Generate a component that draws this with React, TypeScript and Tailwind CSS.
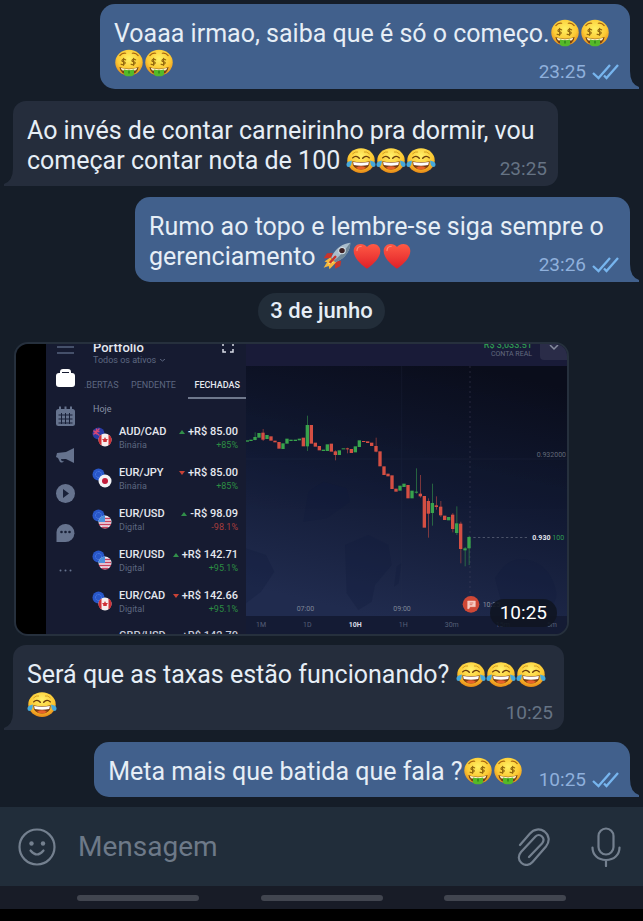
import React from 'react';

type Side = 'in' | 'out';

function Joy() {
  return (
    <svg role="img" aria-label="😂" viewBox="0 0 36 36" preserveAspectRatio="none" className="inline-block h-[27px] w-[30px] align-[-5px]">
      <defs>
        <radialGradient id="joy" cx=".5" cy=".3" r=".75">
          <stop offset="0" stopColor="#fff06a" />
          <stop offset=".6" stopColor="#fbc630" />
          <stop offset="1" stopColor="#e27b12" />
        </radialGradient>
      </defs>
      <circle cx="18" cy="18" r="16.500" fill="url(#joy)" />
      <path d="M8 9q3-3.500 6-2.500M28 9q-3-3.500-6-2.500" fill="none" stroke="#d29a1e" strokeWidth="1.200" strokeLinecap="round" />
      <path d="M8 14.500q4-4.500 8 .5M28 14.500q-4-4.500-8 .5" fill="none" stroke="#6d3d0d" strokeWidth="1.700" strokeLinecap="round" />
      <path d="M7.500 19q10.500 2.500 21 0q0 11-10.500 11t-10.500-11z" fill="#7a3b12" />
      <path d="M8.500 20q9.500 2 19 0l-.8 4q-8.700 2-17.400 0z" fill="#fff" />
      <path d="M12 27.500q6-3.500 12 0q-2.500 2.500-6 2.500t-6-2.500z" fill="#e8622a" />
      <path d="M7 18q-6.500 1.500-6.500 5.500q0 3 2.800 3q3.700-.5 3.700-8.500zM29 18q6.500 1.500 6.500 5.500q0 3-2.800 3q-3.700-.5-3.700-8.500z" fill="#45a9dc" />
    </svg>
  );
}

function MoneyFace() {
  return (
    <svg role="img" aria-label="🤑" viewBox="0 0 36 36" preserveAspectRatio="none" className="inline-block h-7 w-[30px] align-[-5px]">
      <defs>
        <radialGradient id="money" cx=".5" cy=".35" r=".7">
          <stop offset="0" stopColor="#fff164" />
          <stop offset=".6" stopColor="#fcc933" />
          <stop offset="1" stopColor="#e08218" />
        </radialGradient>
      </defs>
      <circle cx="18" cy="17.500" r="16.500" fill="url(#money)" />
      <path d="M7 8.500q3-4 7-3M29 8.500q-3-4-7-3" fill="none" stroke="#a8640e" strokeWidth="1.400" strokeLinecap="round" />
      <g fill="none" stroke="#94690f" strokeWidth="1.400" strokeLinecap="round">
        <path d="M14 14q-2.500-2-4 0t1.500 2.500t1.500 2.500t-4.500.5M11.500 12v9" />
        <path d="M26 14q-2.500-2-4 0t1.500 2.500t1.500 2.500t-4.500.5M23.500 12v9" />
      </g>
      <path d="M6.500 23q11.500 5 23 0q-1 9.500-11.500 9.500t-11.500-9.500z" fill="#76420f" />
      <path d="M8 24.200q10 3.800 20 0l-1.500 3q-8.500 2-17 0z" fill="#fff3c6" />
      <path d="M12 26.500q6 1.800 12 0v5.500q0 3-6 3t-6-3z" fill="#54b928" />
      <path d="M18 27.500v4" stroke="#237a16" strokeWidth="1.500" />
    </svg>
  );
}

function Heart() {
  return (
    <svg role="img" aria-label="❤️" viewBox="0 0 36 36" preserveAspectRatio="none" className="inline-block h-7 w-[30px] align-[-5px]">
      <defs>
        <linearGradient id="heart" x1="0" y1="0" x2="0" y2="1">
          <stop offset="0" stopColor="#ff5a45" />
          <stop offset="1" stopColor="#e01f27" />
        </linearGradient>
      </defs>
      <path d="M18 34.500C12 30 2 21 2 11.500C2 6 6 2.500 10.200 2.500C14 2.500 17 4.500 18 6.500C19 4.500 22 2.500 25.800 2.500C30 2.500 34 6 34 11.500C34 21 24 30 18 34.500z" fill="url(#heart)" />
      <path d="M6 11q0-5 5-5.500" fill="none" stroke="#ff8a76" strokeWidth="1.500" strokeLinecap="round" />
    </svg>
  );
}

function Rocket() {
  return (
    <svg role="img" aria-label="🚀" viewBox="0 0 36 36" preserveAspectRatio="none" className="inline-block h-7 w-[30px] align-[-5px]">
      <path d="M13 14L6 14.500L2 21L11 21zM23 24L22 31L16 34.500L15 25z" fill="#c8342c" />
      <path d="M10 20L3 25L6 26L2 33L8 31L9 35L17 26z" fill="#f6b83c" />
      <path d="M11 23L7 29L14 26z" fill="#fff08a" />
      <path d="M34 1C25 2 16 8 11 20L16 26C28 21 34 11 34 1z" fill="#a9bdcc" />
      <path d="M34 1C28 10 22 18 14 24L16 26C28 21 34 11 34 1z" fill="#6f8798" />
      <circle cx="24" cy="11" r="4" fill="#3c2225" stroke="#d4e1e9" strokeWidth="1.300" />
      <path d="M16 19L10 26" stroke="#c8342c" strokeWidth="3" strokeLinecap="round" />
    </svg>
  );
}

function Checks() {
  return (
    <svg aria-label="Lida" viewBox="0 0 27 16" className="h-4 w-[27px]" fill="none" stroke="#77b5ee" strokeWidth="2.300">
      <path d="M1 9l5.500 5L18 1M12 11.500l2.500 2.500L26 1" />
    </svg>
  );
}

function Bubble({ side, time, limit, children }: { side: Side; time: string; limit: string; children: React.ReactNode }) {
  const out = side === 'out';
  return (
    <article
      className={
        'relative w-fit pt-[15px] pr-[11px] pb-[10px] pl-[14px] ' + limit +
        (out ? ' mr-[13px] self-end rounded-[15px] rounded-br-none bg-[#41608c]' : ' ml-[13px] rounded-[13px] rounded-bl-none bg-[#252d3c]')
      }
    >
      {children}
      <span className={'float-right mt-[14px] -mb-1 ml-4 flex h-[18px] items-center gap-[6px] ' + (out ? 'text-[#8fb0dc]' : 'text-[#667384]')}>
        <time className="text-[19px] leading-[18px]">{time}</time>
        {out && <Checks />}
      </span>
      {out ? (
        <svg viewBox="0 0 9 18" className="absolute bottom-0 left-full h-[18px] w-[9px]" fill="#41608c"><path d="M0 0Q0 13 9 16V18H0z" /></svg>
      ) : (
        <svg viewBox="0 0 9 18" className="absolute right-full bottom-0 h-[18px] w-[9px]" fill="#252d3c"><path d="M9 0Q9 13 0 16V18H9z" /></svg>
      )}
    </article>
  );
}

type Flag = 'aud' | 'eur' | 'cad' | 'jpy' | 'usd';

function FlagDot({ kind, x, y }: { kind: Flag; x: number; y: number }) {
  return (
    <g transform={`translate(${x} ${y})`}>
      {kind === 'eur' && <><circle r="6" fill="#2856c8" /><circle r="3" fill="none" stroke="#5d8df0" strokeDasharray="1 1.300" /></>}
      {kind === 'aud' && <><circle r="6" fill="#2a3ba5" /><path d="M-5-3L1 2M1-5L-5 1M-2-5V1M-5-2H1" stroke="#d64672" strokeWidth="1.300" /><circle cx="3" cy="2" r=".8" fill="#fff" /></>}
      {kind === 'jpy' && <><circle r="6.500" fill="#f3f3f6" /><circle r="3" fill="#c31c3b" /></>}
      {kind === 'cad' && <><circle r="6.500" fill="#f6eeee" /><path d="M-3.500-5.500A6.500 6.500 0 0 0-3.500 5.500zM3.500-5.500A6.500 6.500 0 0 1 3.500 5.500z" fill="#cf3036" /><path d="M0-3l1 2 2 0-1.500 2 .5 1h-4l.5-1L-3-1l2 0z" fill="#cf3036" /></>}
      {kind === 'usd' && <><circle r="6.500" fill="#eee9f2" /><path d="M-5-3.500H5M-6-.5H6M-6 2.500H6M-3 5.500H3" stroke="#c8405c" strokeWidth="1.500" /><path d="M-6.300 0A6.500 6.500 0 0 1 0-6.500V0z" fill="#4b91dd" /></>}
    </g>
  );
}

const trades: { a: Flag; b: Flag; pair: string; type: string; up: boolean; value: string; pct: string; loss?: boolean }[] = [
  { a: 'aud', b: 'cad', pair: 'AUD/CAD', type: 'Binária', up: true, value: '+R$ 85.00', pct: '+85%' },
  { a: 'eur', b: 'jpy', pair: 'EUR/JPY', type: 'Binária', up: false, value: '+R$ 85.00', pct: '+85%' },
  { a: 'eur', b: 'usd', pair: 'EUR/USD', type: 'Digital', up: true, value: '-R$ 98.09', pct: '-98.1%', loss: true },
  { a: 'eur', b: 'usd', pair: 'EUR/USD', type: 'Digital', up: true, value: '+R$ 142.71', pct: '+95.1%' },
  { a: 'eur', b: 'cad', pair: 'EUR/CAD', type: 'Digital', up: false, value: '+R$ 142.66', pct: '+95.1%' },
];

// x, body top, body bottom, rising, wick top, wick bottom
const candles: [number, number, number, number, number?, number?][] = [
  [22, 316, 320, 1], [33, 314, 318, 1], [45, 306, 315, 1, 292, 316], [57, 294, 308, 1], [69, 293, 314, 0, 282, 318],
  [81, 300, 312, 1], [93, 304, 317, 0], [105, 317, 322, 0], [117, 321, 341, 0], [129, 325, 342, 1], [141, 311, 326, 1],
  [153, 314, 318, 1], [166, 314, 318, 1], [178, 311, 316, 1], [190, 308, 334, 0], [202, 270, 334, 1, 242, 348],
  [214, 270, 326, 0], [226, 323, 335, 0], [238, 333, 346, 0], [250, 344, 348, 1], [262, 328, 348, 1], [274, 326, 350, 0],
  [286, 349, 360, 0, 346, 376], [298, 346, 360, 1], [310, 340, 343, 1], [322, 340, 343, 0, 338, 355], [334, 342, 354, 0],
  [346, 334, 352, 1], [358, 316, 336, 1], [371, 318, 321, 0], [383, 319, 324, 0], [395, 323, 333, 0], [408, 333, 350, 0, 308, 352],
  [420, 349, 394, 0], [432, 394, 420, 0], [444, 416, 424, 0], [456, 421, 462, 0], [468, 461, 470, 0], [480, 452, 467, 1],
  [492, 446, 456, 1], [504, 450, 490, 0], [516, 467, 490, 1], [529, 470, 473, 1, 400, 476], [541, 476, 484, 0, 420, 488],
  [553, 483, 578, 0], [565, 498, 536, 0, 490, 608], [577, 504, 534, 1, 446, 572], [589, 511, 516, 0, 484, 524],
  [602, 515, 541, 0, 498, 546], [614, 542, 555, 0], [626, 546, 556, 1], [638, 539, 582, 0, 534, 592], [650, 565, 594, 1, 514, 600],
  [662, 566, 642, 0, 560, 685], [675, 640, 646, 1, 636, 694], [687, 606, 640, 1, 602, 690],
];

function Chart() {
  return (
    <svg viewBox="18 93 963 750" preserveAspectRatio="none" className="block h-[250px] w-full">
      <defs>
        <linearGradient id="sea" x1=".7" y1="0" x2=".4" y2="1">
          <stop offset="0" stopColor="#0b0e1c" />
          <stop offset=".5" stopColor="#121a34" />
          <stop offset="1" stopColor="#202b4e" />
        </linearGradient>
      </defs>
      <rect x="18" y="93" width="963" height="750" fill="url(#sea)" />
      <path d="M18 640l60 20 25 50-40 60-45 35zM205 470l45-30 70 20 10 40-70 50-70 10zM315 630l70-30 60 30 10 60-50 60-10 50-40 25-35-50zM765 730q40-70 100-55t80 80-60 70-100-20zM470 695l14-10-8 60-14 10z" fill="#111b3c" opacity=".3" />
      <path d="M485 93V843M18 372H981" stroke="#28334e" strokeWidth="2" opacity=".3" />
      <path d="M690 93V800" stroke="#52506a" strokeWidth="2" strokeDasharray="6 9" opacity=".6" />
      {candles.map(([x, top, bottom, up, wt, wb]) => (
        <g key={x} fill={up ? '#38a34c' : '#d44f43'}>
          {wt !== undefined && wb !== undefined && <rect x={x - 1} y={wt} width="3" height={wb - wt} opacity=".55" />}
          <rect x={x - 5} y={top} width="10" height={bottom - top} />
        </g>
      ))}
      <path d="M700 607H865" stroke="#aeb3c1" strokeWidth="2" strokeDasharray="7 7" opacity=".65" />
      <g fontFamily="Roboto, sans-serif" fontSize="21">
        <text x="890" y="366" fill="#626979">0.932000</text>
        <text x="877" y="615" fill="#e3e6ed" fontWeight="700">0.930</text>
        <text x="937" y="615" fill="#2f9d52">100</text>
        <text x="170" y="829" fill="#7d8596">07:00</text>
        <text x="460" y="829" fill="#7d8596">09:00</text>
        <text x="728" y="816" fill="#8a8f9d">10:25</text>
      </g>
      <circle cx="693" cy="808" r="25" fill="#cf4836" />
      <path d="M683 798h23v17h-16l-3 6h-4zM688 803h12" fill="#f6cbc3" stroke="#f6cbc3" strokeWidth="1.500" />
      <path d="M689 804h11M689 809h8" stroke="#cf4836" strokeWidth="2" />
    </svg>
  );
}

function Rail() {
  return (
    <svg aria-label="Menu da corretora" viewBox="46 344 39 289" className="h-[289px] w-[39px] shrink-0" fill="#66738e">
      <path d="M57 347h17M57 353h17" stroke="#56637d" strokeWidth="1.300" />
      <g fill="#fff"><path d="M60 374v-2q0-3 3-3h5q3 0 3 3v2h-2v-2h-7v2z" /><rect x="56" y="373" width="19" height="14" rx="3" /></g>
      <rect x="56" y="409" width="19" height="17" rx="2.500" />
      <path d="M60 406.500v5M65.500 406.500v5M71 406.500v5" stroke="#66738e" strokeWidth="2" />
      <path d="M58.500 415h14M58.500 419h14M58.500 423h14M61.500 413v11M65.500 413v11M69.500 413v11" stroke="#182038" strokeWidth="1" />
      <path d="M57 453l9-1 8-4v15l-8-4h-2q0 5-4 3l-2-4-2-1z" />
      <path d="M61 459q0 3 3 2v-2z" fill="#182038" />
      <circle cx="65.500" cy="493.500" r="9.500" /><path d="M63 489l6 4.500-6 4.500z" fill="#182038" />
      <path d="M56.500 542V532a9 9 0 1 1 9 10z" />
      <g fill="#182038"><circle cx="61.500" cy="532" r="1.300" /><circle cx="65.500" cy="532" r="1.300" /><circle cx="69.500" cy="532" r="1.300" /></g>
      <g><circle cx="60.500" cy="570.500" r="1" /><circle cx="65.500" cy="570.500" r="1" /><circle cx="70.500" cy="570.500" r="1" /></g>
    </svg>
  );
}

function Portfolio() {
  return (
    <section className="flex w-[161px] shrink-0 flex-col text-[9px] leading-3 text-[#5d6780]">
      <div className="flex h-[11px] items-end justify-between overflow-hidden pr-3 pl-2">
        <h2 className="text-[13px] leading-[11px] font-medium text-[#e5e8ef]">Portfolio</h2>
        <svg viewBox="0 0 12 10" className="h-[10px] w-3" fill="none" stroke="#d8dce6" strokeWidth="1.500"><path d="M1 3V0M4 0H1M8 0h3v3M1 6v3h3M11 6v3H8" /></svg>
      </div>
      <p className="mt-px flex items-center gap-1 pl-2">
        Todos os ativos
        <svg viewBox="0 0 5 3" className="h-[3px] w-[5px]" fill="none" stroke="currentColor"><path d="M0 0l2.500 2L5 0" /></svg>
      </p>
      <nav className="mt-[13px] flex items-start justify-between">
        <a href="#abertas" className="-ml-px">.BERTAS</a>
        <a href="#pendente">PENDENTE</a>
        <a href="#fechadas" className="border-b-2 border-[#6f788c] px-[6px] pb-[6px] font-medium text-[#e5e8ef]">FECHADAS</a>
      </nav>
      <p className="mt-1 pl-2 text-[#8791a5]">Hoje</p>
      <ul className="mt-[10px]">
        {trades.map((t, i) => (
          <li key={i} className="flex h-[41px] items-start pr-2 pl-[7px]">
            <svg viewBox="0 0 20 20" className="mt-[2px] h-5 w-5 shrink-0"><FlagDot kind={t.a} x={6.5} y={6.5} /><FlagDot kind={t.b} x={13} y={13} /></svg>
            <div className="ml-[7px] grow">
              <p className="text-[11px] leading-[14px] font-medium text-[#e5e8ef]">{t.pair}</p>
              <p>{t.type}</p>
            </div>
            <div className="text-right">
              <p className="flex items-center gap-[3px] text-[11px] leading-[14px] font-medium whitespace-nowrap text-[#e5e8ef]">
                <svg viewBox="0 0 6 4" className="h-1 w-[6px]" fill={t.up ? '#318f49' : '#c94236'}>{t.up ? <path d="M0 4L3 0l3 4z" /> : <path d="M0 0h6L3 4z" />}</svg>
                {t.value}
              </p>
              <p className={t.loss ? 'text-[#a63d3d]' : 'text-[#2c8d43]'}>{t.pct}</p>
            </div>
          </li>
        ))}
        <li className="flex h-1 justify-between overflow-hidden pr-2 pl-[34px] text-[11px] leading-3 font-medium text-[#c5cad6]">
          <span>GBP/USD</span><span>+R$ 142.70</span>
        </li>
      </ul>
    </section>
  );
}

function Photo() {
  return (
    <figure className="relative mt-[13px] ml-[14px] flex h-[294px] w-full max-w-[555px] overflow-hidden rounded-[14px] border-2 border-[#26303d] bg-[#161b31]">
      <div className="w-[30px] shrink-0 bg-black" />
      <Rail />
      <Portfolio />
      <div className="flex min-w-0 grow flex-col">
        <div className="flex h-[22px] shrink-0 items-start justify-end gap-2 bg-[#191b38]">
          <div className="text-right">
            <p className="flex h-[5px] items-end overflow-hidden text-[9px] leading-[8px] font-medium text-[#2e9950]">R$ 3,033.51</p>
            <p className="text-[7px] leading-[10px] text-[#626a7f]">CONTA REAL</p>
          </div>
          <div className="flex h-4 w-[27px] justify-center rounded-bl-sm bg-[#2a2c48]">
            <svg viewBox="0 0 10 6" className="mt-px h-[6px] w-[10px]" fill="none" stroke="#858b9e" strokeWidth="1.500"><path d="M1 0l4 4 4-4" /></svg>
          </div>
        </div>
        <Chart />
        <div className="flex grow justify-between bg-[#141b34] px-[10px] pt-[3px] text-[7px] leading-3 text-[#566078]">
          <span>1M</span><span>1D</span><span className="font-bold text-[#d9dde7]">10H</span><span>1H</span><span>30m</span><span>15m</span><span>5m</span>
        </div>
      </div>
      <time className="absolute right-[10px] bottom-[7px] rounded-full bg-[#101521]/90 px-[10px] text-[19px] leading-7 text-white">10:25</time>
    </figure>
  );
}

function Composer() {
  return (
    <form className="flex h-[79px] items-center bg-[#212d3a] pr-[22px] pl-[18px] text-[#74808f]" onSubmit={(e) => e.preventDefault()}>
      <button type="button" aria-label="Emojis" className="shrink-0">
        <svg viewBox="0 0 38 38" className="h-[38px] w-[38px]" fill="none" stroke="currentColor" strokeWidth="2.200" strokeLinecap="round">
          <circle cx="19" cy="19" r="17.500" />
          <path d="M12.500 22.500q6.500 8 13 0" />
          <g fill="currentColor" stroke="none"><circle cx="13.500" cy="15.500" r="2.200" /><circle cx="25" cy="15.500" r="2.200" /></g>
        </svg>
      </button>
      <input aria-label="Mensagem" placeholder="Mensagem" className="ml-[22px] min-w-0 grow bg-transparent text-[28px] leading-9 outline-none placeholder:text-[#6d7988]" />
      <button type="button" aria-label="Anexar" className="shrink-0">
        <svg viewBox="0 0 34 38" className="h-[38px] w-[34px]" fill="none" stroke="currentColor" strokeWidth="2.200" strokeLinecap="round" strokeLinejoin="round">
          <path d="M3 17L13 5.500C17 .8 23 .3 27.500 3.500C32.500 7.500 33 13.500 29 18.500L15.500 34C12.500 37.500 8 38 4.500 35C1 32 1 27.500 4 24L18.500 8.500C20.500 6.500 23 6.500 25 8.500C27 10.500 27 13 25 15.500L12 29" />
        </svg>
      </button>
      <button type="button" aria-label="Gravar áudio" className="ml-10 shrink-0">
        <svg viewBox="0 0 30 40" className="h-10 w-[30px]" fill="none" stroke="currentColor" strokeWidth="2.200" strokeLinecap="round">
          <rect x="7.500" y="1.500" width="15" height="26" rx="7.500" />
          <path d="M1.500 20.500C1.500 28 7 33 15 33S28.500 28 28.500 20.500M15 33v6" />
        </svg>
      </button>
    </form>
  );
}

export default function App() {
  return (
    <div className="flex min-h-screen flex-col bg-[#151d28] font-['Roboto','Liberation_Sans',sans-serif]">
      <main className="flex grow flex-col pt-1 text-[25px] leading-[30px] text-[#e6eef6]">
        <Bubble side="out" time="23:25" limit="max-w-[530px]">Voaaa irmao, saiba que é só o começo.<MoneyFace /><MoneyFace /><MoneyFace /><MoneyFace /></Bubble>
        <Bubble side="in" time="23:25" limit="mt-3 max-w-[545px]">Ao invés de contar carneirinho pra dormir, vou começar contar nota de 100 <Joy /><Joy /><Joy /></Bubble>
        <Bubble side="out" time="23:26" limit="mt-[11px] max-w-[495px]">Rumo ao topo e lembre-se siga sempre o gerenciamento <Rocket /><Heart /><Heart /></Bubble>
        <time className="mt-[11px] self-center rounded-full bg-[#222d39] px-3 text-[22px] leading-9 font-medium">3 de junho</time>
        <Photo />
        <Bubble side="in" time="10:25" limit="mt-[9px] max-w-[551px]">Será que as taxas estão funcionando? <Joy /><Joy /><Joy /><Joy /></Bubble>
        <Bubble side="out" time="10:25" limit="mt-3 max-w-[551px]">Meta mais que batida que fala ?<MoneyFace /><MoneyFace /></Bubble>
      </main>
      <footer className="mt-[10px]">
        <Composer />
        <div className="flex h-[23px] items-center justify-between bg-[#181c27] px-[77px]">
          <span className="h-[6px] w-[122px] rounded-full bg-[#41454f]" />
          <span className="h-[6px] w-[122px] rounded-full bg-[#41454f]" />
          <span className="h-[6px] w-[122px] rounded-full bg-[#41454f]" />
        </div>
        <div className="h-3 bg-black" />
      </footer>
    </div>
  );
}
